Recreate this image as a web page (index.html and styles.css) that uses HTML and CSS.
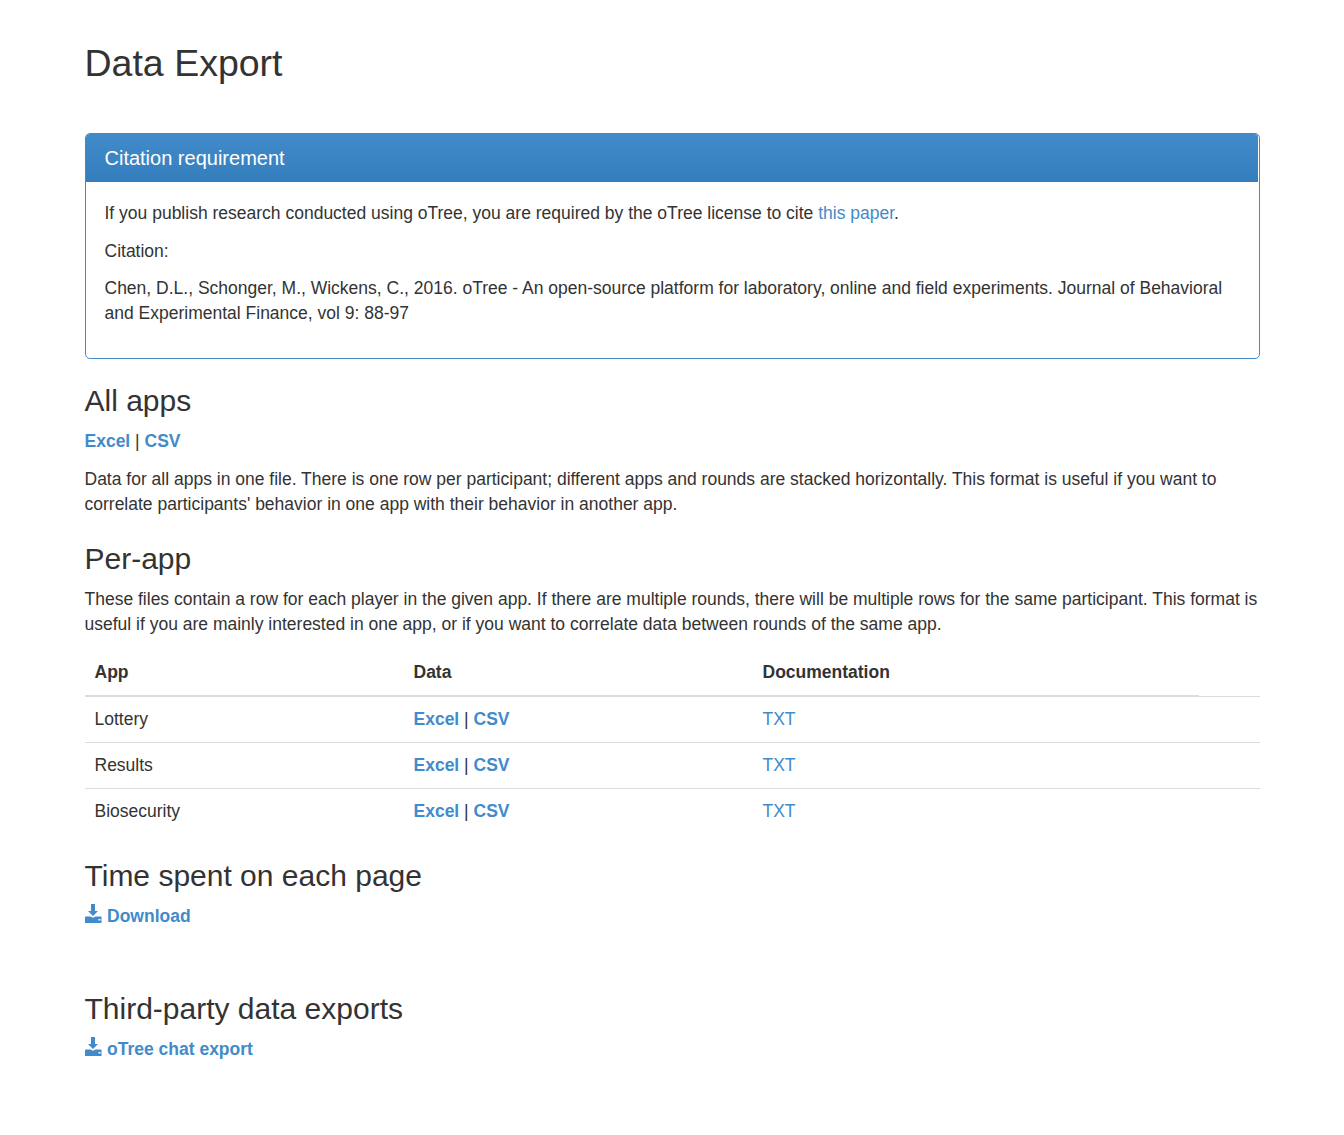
FILE: index.html
```html
<!DOCTYPE html>
<html lang="en">
<head>
<meta charset="utf-8">
<title>Data Export</title>
<link rel="stylesheet" href="styles.css">
</head>
<body>
<svg width="0" height="0" class="sprite" aria-hidden="true">
  <symbol id="save" viewBox="0 0 17 19">
    <path d="M6 0h4v7h3L8 12 3 7h3z"/>
    <path fill-rule="evenodd" d="M0 13l.5-.5h5l2.500 1.200 2.500-1.200h5.500l.5.5v6H0zM13.500 15v1.500H15.500V15z"/>
  </symbol>
</svg>
<main class="container">
  <h1 class="page-title">Data Export</h1>
  <section class="panel">
    <h2 class="panel-heading">Citation requirement</h2>
    <div class="panel-body">
      <p>If you publish research conducted using oTree, you are required by the oTree license to cite <a href="#">this paper</a>.</p>
      <p>Citation:</p>
      <p>Chen, D.L., Schonger, M., Wickens, C., 2016. oTree - An open-source platform for laboratory, online and field experiments. Journal of Behavioral<br>and Experimental Finance, vol 9: 88-97</p>
    </div>
  </section>
  <section class="all-apps">
    <h3>All apps</h3>
    <p><a class="strong" href="#">Excel</a> | <a class="strong" href="#">CSV</a></p>
    <p>Data for all apps in one file. There is one row per participant; different apps and rounds are stacked horizontally. This format is useful if you want to<br>correlate participants' behavior in one app with their behavior in another app.</p>
  </section>
  <section class="per-app">
    <h3>Per-app</h3>
    <p>These files contain a row for each player in the given app. If there are multiple rounds, there will be multiple rows for the same participant. This format is<br>useful if you are mainly interested in one app, or if you want to correlate data between rounds of the same app.</p>
    <table class="table">
      <colgroup><col class="col-app"><col class="col-data"><col class="col-doc"><col class="col-rest"></colgroup>
      <thead><tr><th>App</th><th>Data</th><th>Documentation</th><th class="blank"></th></tr></thead>
      <tbody>
        <tr><td>Lottery</td><td><a class="strong" href="#">Excel</a> | <a class="strong" href="#">CSV</a></td><td><a href="#">TXT</a></td><td></td></tr>
        <tr><td>Results</td><td><a class="strong" href="#">Excel</a> | <a class="strong" href="#">CSV</a></td><td><a href="#">TXT</a></td><td></td></tr>
        <tr><td>Biosecurity</td><td><a class="strong" href="#">Excel</a> | <a class="strong" href="#">CSV</a></td><td><a href="#">TXT</a></td><td></td></tr>
      </tbody>
    </table>
  </section>
  <section class="time-spent">
    <h3>Time spent on each page</h3>
    <a class="strong download" href="#"><svg class="icon"><use href="#save"/></svg>Download</a>
  </section>
  <section class="third-party">
    <h3>Third-party data exports</h3>
    <a class="strong download" href="#"><svg class="icon"><use href="#save"/></svg>oTree chat export</a>
  </section>
</main>
</body>
</html>
```
FILE: styles.css
```css
* { box-sizing: border-box; }
body {
  margin: 0;
  background: #fff;
  color: #333;
  font: 17.5px/25px "Liberation Sans", Arial, sans-serif;
}
.sprite { display: block; }
.container { width: 1175px; margin: 0 auto; padding-top: 43px; white-space: nowrap; }
h1, h2, h3 { margin: 0; font-weight: 400; line-height: 1.1; }
.page-title { height: 41px; font-size: 37.5px; }
p { margin: 0 0 12.5px; }
a { color: #428bca; text-decoration: none; }
.strong { font-weight: 700; }
h3 { height: 33px; margin-bottom: 12px; font-size: 30px; }
.panel {
  height: 226px;
  margin-top: 49px;
  border: 1px solid #428bca;
  border-radius: 5px;
}
.panel-heading {
  height: 48px;
  margin-right: 1px;
  padding: 13px 19px;
  border-radius: 4px 3px 0 0;
  background: linear-gradient(#428bca, #357ebd);
  color: #fff;
  font-size: 20px;
}
.panel-body { padding: 19px; }
.all-apps { margin-top: 25px; }
.all-apps p { margin-bottom: 13px; }
.per-app { margin-top: 25px; }
.table { width: 1175px; table-layout: fixed; border-collapse: separate; border-spacing: 0; }
.col-app { width: 319px; }
.col-data { width: 349px; }
.col-doc { width: 446px; }
th, td { padding: 10px; text-align: left; vertical-align: top; }
th { border-bottom: 2px solid #ddd; }
th.blank { border-bottom-width: 1px; }
tr + tr td { border-top: 1px solid #ddd; }
.time-spent { margin-top: 25px; }
.third-party { margin-top: 63px; }
.download { display: flex; align-items: flex-start; gap: 5.5px; }
.icon { width: 17px; height: 19px; fill: #428bca; }
```
